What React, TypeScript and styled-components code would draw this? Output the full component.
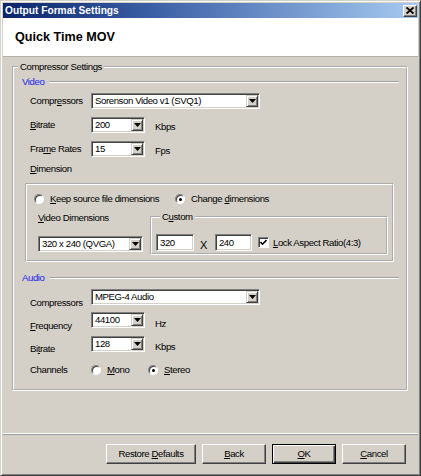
import React from 'react';
import styled, { createGlobalStyle } from 'styled-components';

const GlobalStyle = createGlobalStyle`
  html, body {
    margin: 0;
    padding: 0;
    background: #d4d0c8;
  }
  body {
    font-family: "Liberation Sans", Arial, sans-serif;
    font-size: 9.6px;
    letter-spacing: -0.4px;
    line-height: 12px;
    color: #000;
  }
`;

const Window = styled.div`
  width: 421px;
  height: 476px;
  box-sizing: border-box;
  display: flex;
  flex-direction: column;
  background: #d4d0c8;
  border: 1px solid;
  border-color: #d4d0c8 #404040 #404040 #d4d0c8;
  box-shadow: inset 1px 1px 0 #fff, inset -1px -1px 0 #808080;
  padding: 2px;
`;
const TitleBar = styled.div`
  height: 15px;
  flex: none;
  display: flex;
  align-items: center;
  justify-content: space-between;
  padding: 0 1px 0 2px;
  background: linear-gradient(90deg, #0a246a 0%, #3a5ea4 35%, #a6caf0 100%);
`;
const TitleText = styled.span`
  font-weight: bold;
  font-size: 10.2px;
  letter-spacing: 0;
  color: #fff;
`;
const CloseButton = styled.div`
  width: 14px;
  height: 12px;
  box-sizing: border-box;
  display: flex;
  align-items: center;
  justify-content: center;
  background: #d4d0c8;
  border: 1px solid;
  border-color: #fff #404040 #404040 #fff;
  box-shadow: inset -1px -1px 0 #808080;
`;
const Header = styled.div`
  height: 38px;
  flex: none;
  display: flex;
  align-items: center;
  padding-left: 12px;
  background: #fff;
  border-bottom: 1px solid #b4b0a8;
`;
const HeaderTitle = styled.h1`
  margin: 0;
  font-size: 12.6px;
  letter-spacing: 0;
  font-weight: bold;
`;
const Body = styled.div`
  flex: 1;
  display: flex;
  flex-direction: column;
`;
const GroupBox = styled.fieldset`
  margin: 0;
  padding: 0;
  min-width: 0;
  border: 2px groove #fff;
`;
const OuterGroup = styled(GroupBox)`
  margin: 4px 10px 0 9px;
  padding-bottom: 11px;
`;
const Legend = styled.legend`
  margin-left: 4px;
  padding: 0 2px;
  line-height: 12px;
`;
const SectionHeading = styled.div<{ $mt: number }>`
  display: flex;
  align-items: center;
  height: 14px;
  margin: ${p => p.$mt}px 7px 0 8px;
  color: #1c1cf0;

  &::after {
    content: '';
    flex: 1;
    margin-left: 5px;
    border-top: 1px solid #a0a0a0;
    border-bottom: 1px solid #fff;
  }
`;
const Row = styled.div<{ $mt: number }>`
  display: flex;
  align-items: center;
  height: 16px;
  margin-top: ${p => p.$mt}px;
  padding-left: 16px;
  white-space: nowrap;
`;
const TextRow = styled.div<{ $mt: number }>`
  height: 12px;
  margin-top: ${p => p.$mt}px;
  padding-left: 16px;
`;
const FieldLabel = styled.span<{ $drop?: number }>`
  width: 61px;
  flex: none;
  margin-top: ${p => (p.$drop ?? 0) * 2}px;
`;
const Unit = styled.span<{ $drop?: number }>`
  margin-left: 10px;
  margin-top: ${p => (p.$drop ?? 0) * 2}px;
`;
const ComboBox = styled.div<{ $width: number }>`
  width: ${p => p.$width}px;
  height: 16px;
  flex: none;
  box-sizing: border-box;
  display: flex;
  background: #fff;
  border: 1px solid;
  border-color: #808080 #fff #fff #808080;
  box-shadow: inset 1px 1px 0 #404040, inset -1px -1px 0 #d4d0c8;
  padding: 1px;
`;
const ComboText = styled.span`
  flex: 1;
  padding-left: 2px;
  line-height: 12px;
  white-space: nowrap;
  overflow: hidden;
`;
const ComboButton = styled.span`
  width: 12px;
  flex: none;
  box-sizing: border-box;
  display: flex;
  align-items: center;
  justify-content: center;
  background: #d4d0c8;
  border: 1px solid;
  border-color: #d4d0c8 #404040 #404040 #d4d0c8;
  box-shadow: inset 1px 1px 0 #fff, inset -1px -1px 0 #808080;
`;
const TextInput = styled.div<{ $width: number }>`
  width: ${p => p.$width}px;
  height: 17px;
  flex: none;
  box-sizing: border-box;
  background: #fff;
  border: 1px solid;
  border-color: #808080 #fff #fff #808080;
  box-shadow: inset 1px 1px 0 #404040, inset -1px -1px 0 #d4d0c8;
  padding: 2px 0 0 3px;
`;
const DimensionBox = styled.div`
  height: 79px;
  box-sizing: border-box;
  margin: 8px 12px 0 11px;
  border: 2px groove #fff;
`;
const RadioRow = styled.div`
  display: flex;
  align-items: center;
  height: 14px;
  margin-top: 7px;
  padding-left: 7px;
  white-space: nowrap;
`;
const Option = styled.label<{ $width?: number }>`
  display: flex;
  align-items: center;
  gap: 6px;
  flex: none;
  width: ${p => (p.$width ? `${p.$width}px` : 'auto')};
`;
const RadioCircle = styled.span<{ $checked?: boolean }>`
  width: 10px;
  height: 10px;
  flex: none;
  box-sizing: border-box;
  border-radius: 50%;
  display: flex;
  align-items: center;
  justify-content: center;
  background: #fff;
  border: 1px solid;
  border-color: #808080 #fff #fff #808080;
  box-shadow: inset 1px 1px 0 #404040;

  &::after {
    content: '';
    width: 3px;
    height: 3px;
    border-radius: 50%;
    background: ${p => (p.$checked ? '#000' : 'transparent')};
  }
`;
const CheckBox = styled.span`
  width: 11px;
  height: 11px;
  flex: none;
  box-sizing: border-box;
  display: flex;
  align-items: center;
  justify-content: center;
  background: #fff;
  border: 1px solid;
  border-color: #808080 #fff #fff #808080;
  box-shadow: inset 1px 1px 0 #404040;
`;
const LowerRow = styled.div`
  display: flex;
  align-items: flex-start;
  margin-top: 5px;
`;
const DimColumn = styled.div`
  width: 105px;
  flex: none;
  margin-left: 11px;
  padding-top: 1px;
`;
const DimSelect = styled.div`
  margin-top: 12px;
`;
const CustomGroup = styled(GroupBox)`
  flex: 1;
  margin: 0 4px 0 7px;
  padding: 0 0 2px 4px;
`;
const CustomRow = styled.div`
  display: flex;
  align-items: center;
  height: 17px;
  margin-top: 11px;
  white-space: nowrap;
`;
const Times = styled.span`
  margin: 5px 8px 0 6px;
  font-size: 11px;
`;
const LockLabel = styled.span`
  margin-left: 4px;
`;
const CheckOption = styled.label`
  display: flex;
  align-items: center;
  margin-left: 6px;
`;
const Separator = styled.div`
  margin-top: 42px;
  border-top: 1px solid #fff;
  border-bottom: 1px solid #9c9ca4;
`;
const ButtonRow = styled.div`
  display: flex;
  justify-content: flex-end;
  gap: 6px;
  margin-top: 9px;
  padding-right: 12px;
`;
const Button = styled.button<{ $width: number; $default?: boolean }>`
  width: ${p => p.$width}px;
  height: 20px;
  box-sizing: border-box;
  padding: 0;
  font: inherit;
  letter-spacing: inherit;
  color: #000;
  background: #d4d0c8;
  border: 1px solid;
  border-color: ${p => (p.$default ? '#000' : '#fff #404040 #404040 #fff')};
  box-shadow: ${p =>
    p.$default
      ? 'inset 1px 1px 0 #fff, inset -1px -1px 0 #404040, inset -2px -2px 0 #808080'
      : 'inset -1px -1px 0 #808080'};
`;
const U = styled.span`
  text-decoration: underline;
  text-underline-offset: 1px;
`;

const Combo = ({ value, width }: { value: string; width: number }) => (
  <ComboBox $width={width}>
    <ComboText>{value}</ComboText>
    <ComboButton>
      <svg width="7" height="4" viewBox="0 0 7 4">
        <polygon points="0,0 7,0 3.5,4" fill="#000" />
      </svg>
    </ComboButton>
  </ComboBox>
);

const Radio = ({ checked, children, width }: { checked?: boolean; children: React.ReactNode; width?: number }) => (
  <Option $width={width}>
    <RadioCircle $checked={checked} />
    <span>{children}</span>
  </Option>
);

export default function App() {
  return (
    <>
      <GlobalStyle />
      <Window>
        <TitleBar>
          <TitleText>Output Format Settings</TitleText>
          <CloseButton>
            <svg width="8" height="7" viewBox="0 0 8 7">
              <path d="M0.5 0.5 L7.5 6.5 M7.5 0.5 L0.5 6.5" stroke="#000" strokeWidth="1.8" />
            </svg>
          </CloseButton>
        </TitleBar>
        <Header>
          <HeaderTitle>Quick Time MOV</HeaderTitle>
        </Header>
        <Body>
          <OuterGroup>
            <Legend>Compressor Settings</Legend>
            <SectionHeading $mt={2}>Video</SectionHeading>
            <Row $mt={4}>
              <FieldLabel>Compr<U>e</U>ssors</FieldLabel>
              <Combo value="Sorenson Video v1 (SVQ1)" width={169} />
            </Row>
            <Row $mt={8}>
              <FieldLabel><U>B</U>itrate</FieldLabel>
              <Combo value="200" width={54} />
              <Unit $drop={2}>Kbps</Unit>
            </Row>
            <Row $mt={8}>
              <FieldLabel>Fra<U>m</U>e Rates</FieldLabel>
              <Combo value="15" width={54} />
              <Unit $drop={2}>Fps</Unit>
            </Row>
            <TextRow $mt={6}>
              <U>D</U>imension
            </TextRow>
            <DimensionBox>
              <RadioRow>
                <Radio width={141}><U>K</U>eep source file dimensions</Radio>
                <Radio checked>Change <U>d</U>imensions</Radio>
              </RadioRow>
              <LowerRow>
                <DimColumn>
                  <U>V</U>ideo Dimensions
                  <DimSelect>
                    <Combo value="320 x 240 (QVGA)" width={105} />
                  </DimSelect>
                </DimColumn>
                <CustomGroup>
                  <Legend>C<U>u</U>stom</Legend>
                  <CustomRow>
                    <TextInput $width={38}>320</TextInput>
                    <Times>X</Times>
                    <TextInput $width={37}>240</TextInput>
                    <CheckOption>
                      <CheckBox>
                        <svg width="7" height="7" viewBox="0 0 7 7">
                          <path d="M0.5 3 L2.5 5.2 L6.5 1" stroke="#000" strokeWidth="1.6" fill="none" />
                        </svg>
                      </CheckBox>
                      <LockLabel><U>L</U>ock Aspect Ratio(4:3)</LockLabel>
                    </CheckOption>
                  </CustomRow>
                </CustomGroup>
              </LowerRow>
            </DimensionBox>
            <SectionHeading $mt={9}>Audio</SectionHeading>
            <Row $mt={4}>
              <FieldLabel $drop={6}>Compressors</FieldLabel>
              <Combo value="MPEG-4 Audio" width={169} />
            </Row>
            <Row $mt={7}>
              <FieldLabel $drop={6}><U>F</U>requency</FieldLabel>
              <Combo value="44100" width={54} />
              <Unit $drop={4}>Hz</Unit>
            </Row>
            <Row $mt={8}>
              <FieldLabel $drop={5}>Bi<U>t</U>rate</FieldLabel>
              <Combo value="128" width={54} />
              <Unit $drop={3}>Kbps</Unit>
            </Row>
            <Row $mt={10}>
              <FieldLabel>Channels</FieldLabel>
              <Radio width={57}><U>M</U>ono</Radio>
              <Radio checked><U>S</U>tereo</Radio>
            </Row>
          </OuterGroup>
          <Separator />
          <ButtonRow>
            <Button $width={90}>Restore <U>D</U>efaults</Button>
            <Button $width={64}><U>B</U>ack</Button>
            <Button $width={64} $default><U>O</U>K</Button>
            <Button $width={64}><U>C</U>ancel</Button>
          </ButtonRow>
        </Body>
      </Window>
    </>
  );
}
